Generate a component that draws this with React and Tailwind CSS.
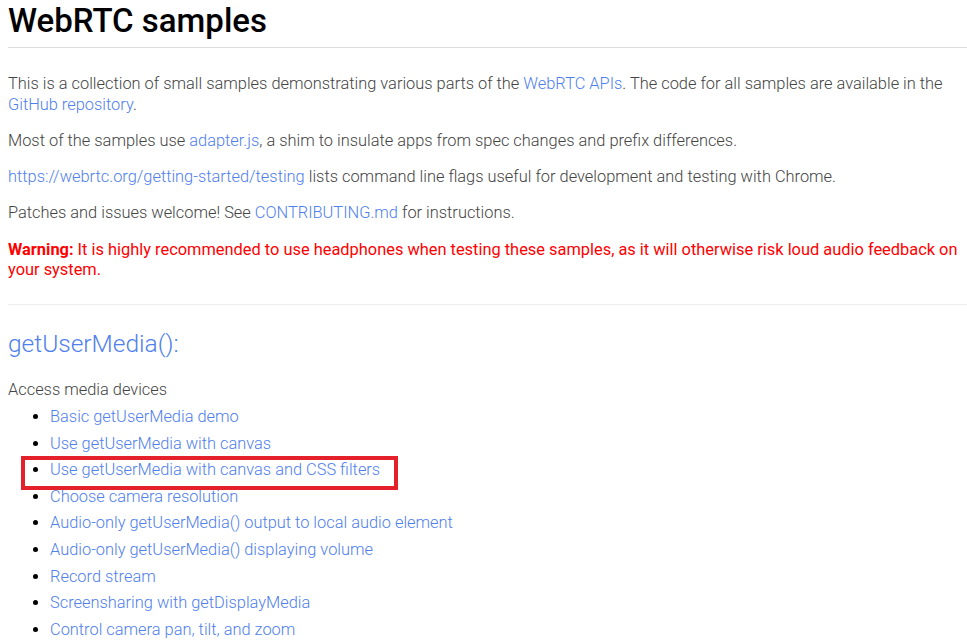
import React from "react";

const links = [
    "Basic getUserMedia demo",
    "Use getUserMedia with canvas",
    "Use getUserMedia with canvas and CSS filters",
    "Choose camera resolution",
    "Audio-only getUserMedia() output to local audio element",
    "Audio-only getUserMedia() displaying volume",
    "Record stream",
    "Screensharing with getDisplayMedia",
    "Control camera pan, tilt, and zoom",
];

const A = ({ children }) => <a className="text-[#4f80ec] no-underline">{children}</a>;

export default function App() {
    return (
        <div className="h-[641px] overflow-hidden bg-white pl-2 font-['Roboto',sans-serif] text-[16.4px] font-light text-[#444]">
            <h1 className="border-b border-[#ddd] pb-[5px] text-[33px] leading-[42px] font-medium text-black">
                WebRTC samples
            </h1>

            <p className="mt-[26px] pr-2 leading-[20.5px]">
                This is a collection of small samples demonstrating various parts of the <A>WebRTC APIs</A>. The code for all samples are available in the <A>GitHub repository</A>.
            </p>
            <p className="mt-[16px] leading-[20.5px]">
                Most of the samples use <A>adapter.js</A>, a shim to insulate apps from spec changes and prefix differences.
            </p>
            <p className="mt-[15.5px] leading-[20.5px]">
                <A>https://webrtc.org/getting-started/testing</A> lists command line flags useful for development and testing with Chrome.
            </p>
            <p className="mt-[15.5px] leading-[20.5px]">
                Patches and issues welcome! See <A>CONTRIBUTING.md</A> for instructions.
            </p>
            <p className="mt-[16px] pr-2 leading-[20.5px] font-normal text-[#ff0000]">
                <strong className="font-bold">Warning:</strong> It is highly recommended to use headphones when testing these samples, as it will otherwise risk loud audio feedback on your system.
            </p>

            <div className="mt-[23px] border-t border-[#eee]" />

            <h2 className="mt-[24px] text-[24.5px] leading-[30px] font-light text-[#4f80ec]">getUserMedia():</h2>

            <p className="mt-[21px] leading-[20.5px]">Access media devices</p>
            <ul className="mt-[4px] list-disc pl-[42px]">
                {links.map((t, i) => (
                    <li key={i} className={`leading-[26.6px] marker:text-black ${i === 2 ? "relative" : ""}`}>
                        <A>{t}</A>
                        {i === 2 && (
                            <span className="pointer-events-none absolute top-[-1.5px] left-[-29px] h-[34px] w-[377px] border-[4px] border-[#e4202a]" />
                        )}
                    </li>
                ))}
            </ul>
        </div>
    );
}
